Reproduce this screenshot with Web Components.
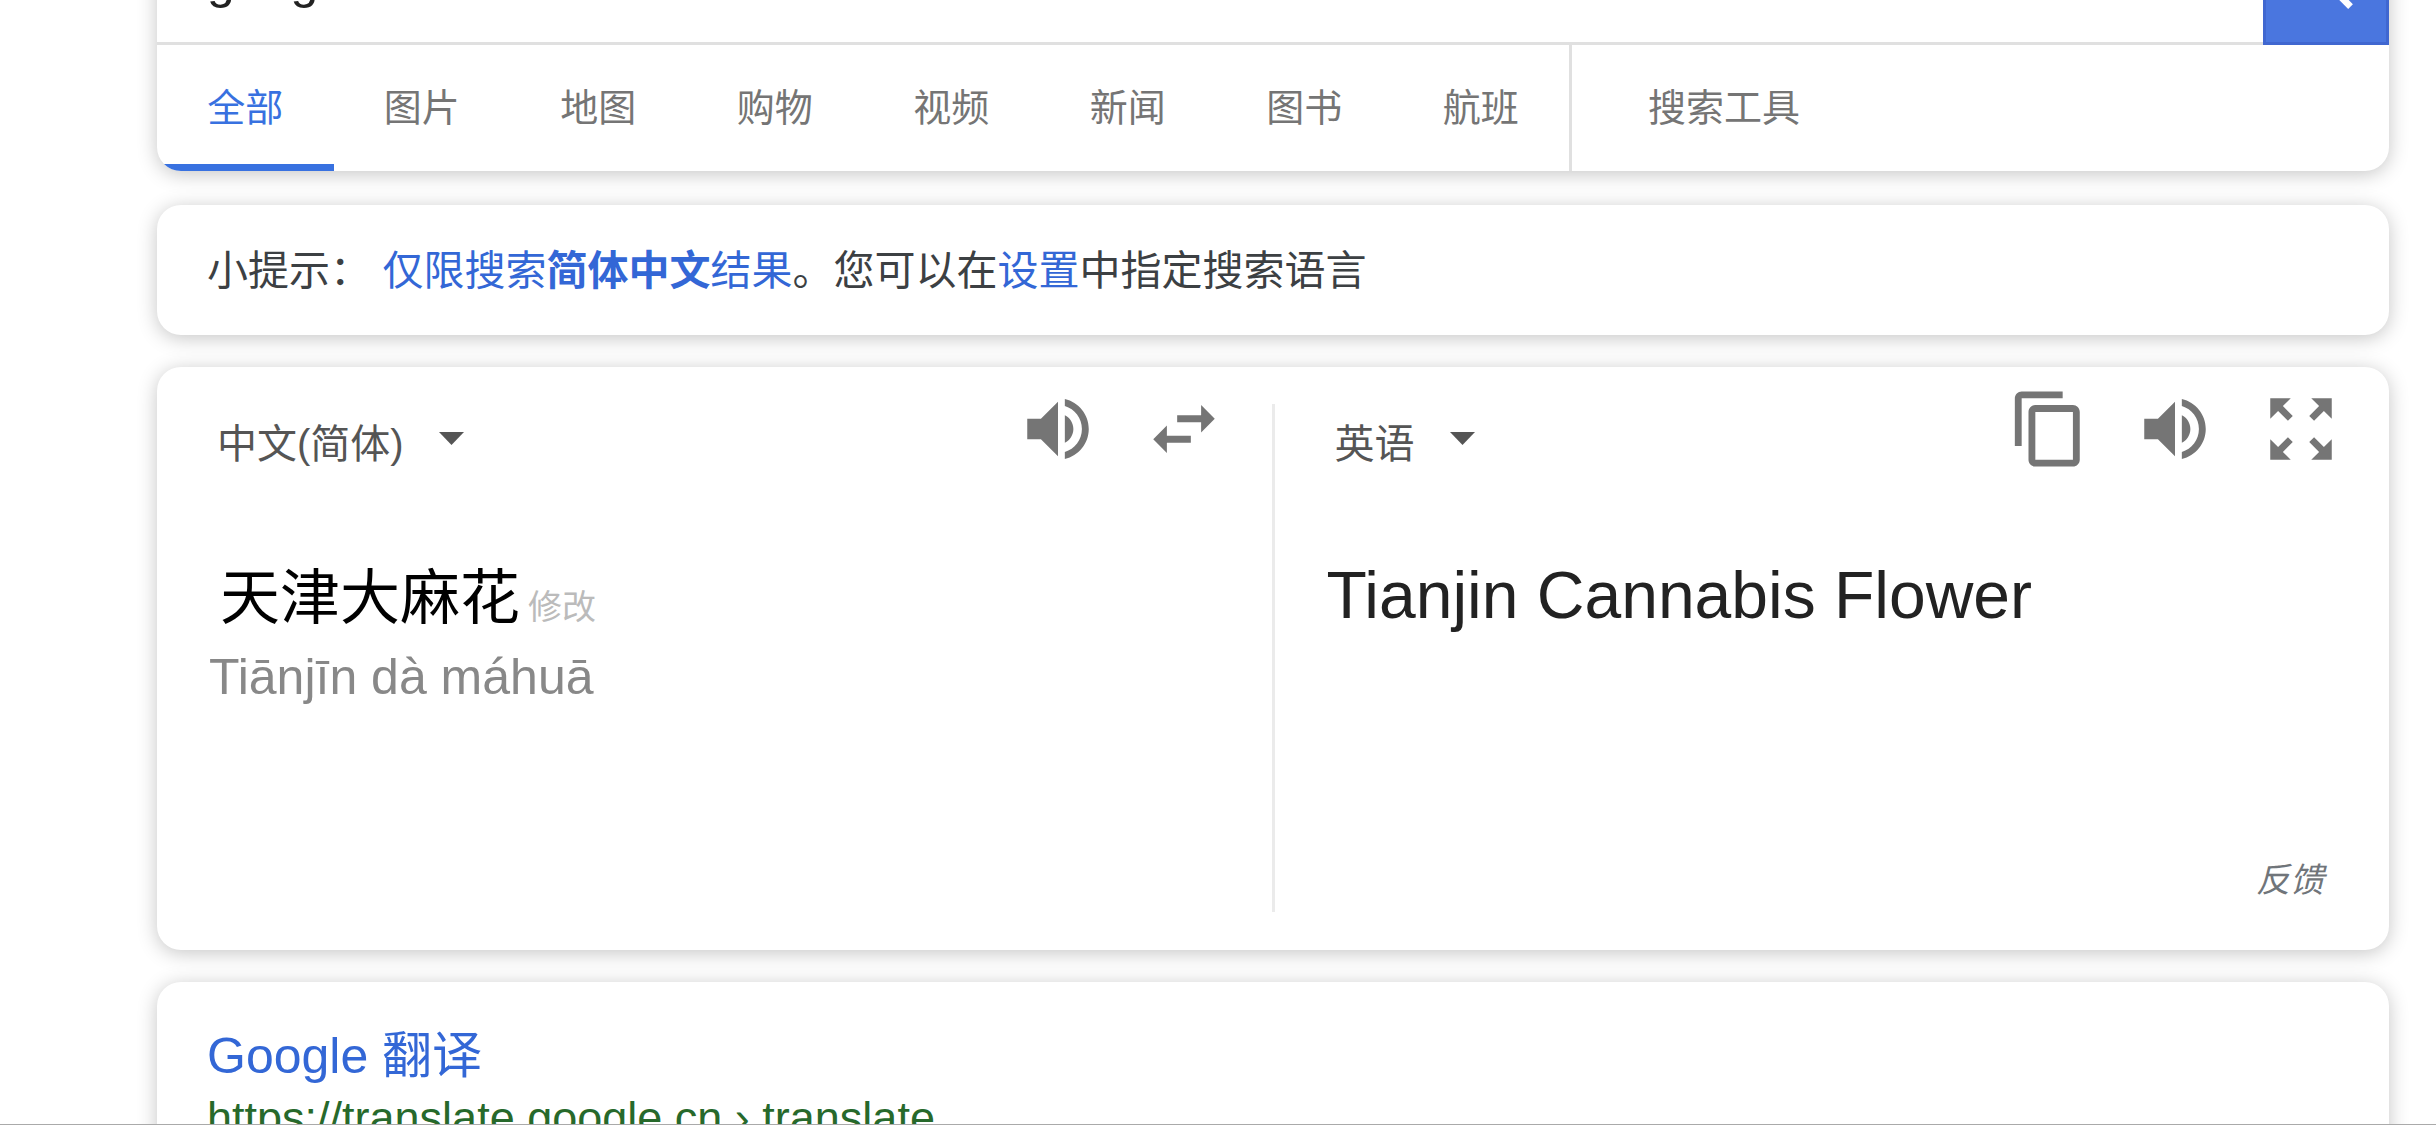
<!DOCTYPE html>
<html lang="zh-CN">
<head>
<meta charset="utf-8">
<meta name="viewport" content="width=device-width, initial-scale=1">
<title>google</title>
<style>
  html, body { margin: 0; height: 100%; }
  body {
    background: #fff;
    color: #3c4043;
    font-family: "Liberation Sans", "Noto Sans CJK SC", sans-serif;
    overflow: hidden;
  }
</style>
</head>
<body>
<search-page></search-page>

<script>
const RESET = `
  *, *::before, *::after { box-sizing: border-box; }
  a { color: inherit; text-decoration: none; }
  button, input, select {
    font: inherit; color: inherit; margin: 0; padding: 0;
    border: 0; border-radius: 0; background: none; outline: 0;
  }
`;

function define(name, html, setup) {
  const template = document.createElement('template');
  template.innerHTML = html;
  customElements.define(name, class extends HTMLElement {
    constructor() {
      super();
      this.attachShadow({ mode: 'open' }).append(template.content.cloneNode(true));
    }
    connectedCallback() {
      if (setup) setup(this, this.shadowRoot);
    }
  });
}

const ICONS = {
  search: 'M15.5 14h-.79l-.28-.27A6.47 6.47 0 0 0 16 9.5 6.5 6.5 0 1 0 9.5 16c1.61 0 3.09-.59 4.23-1.57l.27.28v.79l5 4.99L20.49 19l-4.99-5zm-6 0C7.01 14 5 11.99 5 9.5S7.01 5 9.5 5 14 7.01 14 9.5 11.99 14 9.5 14z',
  volume: 'M3 9v6h4l5 5V4L7 9H3zm13.5 3c0-1.77-1.02-3.29-2.5-4.03v8.05c1.48-.73 2.5-2.25 2.5-4.02zM14 3.23v2.06c2.89.86 5 3.54 5 6.71s-2.11 5.85-5 6.71v2.06c4.01-.91 7-4.49 7-8.77s-2.99-7.86-7-8.77z',
  swap: 'M6.99 11L3 15l3.99 4v-3H14v-2H6.99v-3zM21 9l-3.99-4v3H10v2h7.01v3L21 9z',
  copy: 'M16 1H4c-1.1 0-2 .9-2 2v14h2V3h12V1zm3 4H8c-1.1 0-2 .9-2 2v14c0 1.1.9 2 2 2h11c1.1 0 2-.9 2-2V7c0-1.1-.9-2-2-2zm0 16H8V7h11v14z',
  expand: 'M15 3l2.3 2.3-2.89 2.87 1.42 1.42L18.7 6.7 21 9V3zM3 9l2.3-2.3 2.87 2.89 1.42-1.42L6.7 5.3 9 3H3zm6 12l-2.3-2.3 2.89-2.87-1.42-1.42L5.3 17.3 3 15v6zm12-6l-2.3 2.3-2.87-2.89-1.42 1.42 2.89 2.87L15 21h6z'
};

define('icon-button', `
  <style>${RESET}
    :host { display: block; flex: none; color: #757575; }
    button { display: flex; cursor: pointer; }
    svg { width: var(--icon-size, 82px); height: var(--icon-size, 82px); fill: currentColor; }
  </style>
  <button type="button"><svg viewBox="0 0 24 24" aria-hidden="true"><path/></svg></button>
`, (host, root) => {
  root.querySelector('path').setAttribute('d', ICONS[host.getAttribute('icon')]);
  root.querySelector('button').setAttribute('aria-label', host.getAttribute('label'));
});

define('surface-card', `
  <style>
    :host {
      display: block;
      background: #fff;
      border-radius: 24px;
      box-shadow: 0 3px 20px rgba(0, 0, 0, .23);
    }
  </style>
  <slot></slot>
`);

define('search-box', `
  <style>${RESET}
    :host { display: block; }
    form { display: flex; height: 126px; }
    input {
      flex: 1; min-width: 0;
      padding: 0 50px;
      border-bottom: 3px solid #e0e0e0;
      font-size: 50px;
      color: #222;
    }
    button {
      display: flex; align-items: center; justify-content: center;
      width: 126px;
      background: #4a76df;
      border: 3px solid #4067d0;
      color: #fff;
    }
    svg { width: 76px; height: 76px; fill: currentColor; }
  </style>
  <form role="search">
    <input type="text" name="q" value="google" aria-label="搜索">
    <button type="button" aria-label="Google 搜索">
      <svg viewBox="0 0 24 24" aria-hidden="true"><path d="${ICONS.search}"/></svg>
    </button>
  </form>
`);

define('search-tabs', `
  <style>${RESET}
    :host { display: block; font-size: 38px; line-height: 48px; color: #757575; }
    nav {
      display: flex; height: 126px; overflow: hidden;
      border-radius: 0 0 24px 24px;
    }
    .tabs {
      display: grid; grid-template-columns: repeat(8, 1fr);
      width: 1415px;
      border-right: 3px solid #e0e0e0;
    }
    a { display: flex; align-items: center; justify-content: center; }
    .active { color: #3871e0; box-shadow: inset 0 -7px #3871e0; }
    .tools { padding: 0 76px; }
  </style>
  <nav>
    <div class="tabs">
      <a class="active" href="#all">全部</a>
      <a href="#images">图片</a>
      <a href="#maps">地图</a>
      <a href="#shopping">购物</a>
      <a href="#videos">视频</a>
      <a href="#news">新闻</a>
      <a href="#books">图书</a>
      <a href="#flights">航班</a>
    </div>
    <a class="tools" href="#tools">搜索工具</a>
  </nav>
`);

define('search-tip', `
  <style>${RESET}
    :host { display: block; padding: 36px 50px 34px; font-size: 41px; line-height: 60px; }
    p { margin: 0; }
    a { color: #3367d6; }
  </style>
  <p>小提示： <a href="#lang">仅限搜索<b>简体中文</b>结果</a>。您可以在<a href="#settings">设置</a>中指定搜索语言</p>
`);

define('language-select', `
  <style>${RESET}
    :host { display: block; position: relative; color: #555; }
    select {
      display: block; appearance: none;
      height: 52px; padding-right: 60px;
      font-size: 40px; line-height: 52px;
    }
    svg {
      position: absolute; right: 0; top: 14px;
      width: 25px; height: 13px; fill: currentColor; pointer-events: none;
    }
  </style>
  <select><option></option></select>
  <svg viewBox="0 0 25 13" aria-hidden="true"><path d="M0 0h25L12.500 13z"/></svg>
`, (host, root) => {
  root.querySelector('select').setAttribute('aria-label', host.getAttribute('label'));
  root.querySelector('option').textContent = host.getAttribute('value');
});

define('translate-pane', `
  <style>
    :host { display: flex; flex-direction: column; padding: 21px 47px 50px 52px; }
    .bar { display: flex; align-items: flex-end; gap: 44px; padding-left: 8px; }
    .fill { flex: 1; }
    .text { margin-top: 85px; flex: 1; }
  </style>
  <div class="bar">
    <slot name="language"></slot>
    <span class="fill"></span>
    <slot name="action"></slot>
  </div>
  <div class="text"><slot></slot></div>
  <slot name="footer"></slot>
`);

define('translate-widget', `
  <style>${RESET}
    :host { display: grid; grid-template-columns: 1fr 3px 1fr; min-height: 583px; }
    .divider { background: #ebebeb; margin: 37px 0 38px; }
    p { margin: 0; }
    .source { padding: 4px 0 0 11px; font-size: 60px; line-height: 80px; color: #000; }
    .source a { font-size: 34px; line-height: 40px; margin-left: 8px; color: #bbb; }
    .pinyin { margin-top: 8px; font-size: 50px; line-height: 60px; color: #888; }
    .target { font-size: 66px; line-height: 80px; color: #222; }
    .feedback {
      align-self: flex-end; margin-right: 18px;
      font-size: 34px; line-height: 40px; font-style: italic; color: #70757a;
    }
  </style>
  <translate-pane>
    <language-select slot="language" label="源语言" value="中文(简体)"></language-select>
    <icon-button slot="action" icon="volume" label="朗读原文"></icon-button>
    <icon-button slot="action" icon="swap" label="交换语言"></icon-button>
    <p class="source">天津大麻花<a href="#edit">修改</a></p>
    <p class="pinyin">Tiānjīn dà máhuā</p>
  </translate-pane>
  <div class="divider"></div>
  <translate-pane>
    <language-select slot="language" label="目标语言" value="英语"></language-select>
    <icon-button slot="action" icon="copy" label="复制"></icon-button>
    <icon-button slot="action" icon="volume" label="朗读译文"></icon-button>
    <icon-button slot="action" icon="expand" label="全屏"></icon-button>
    <p class="target">Tianjin Cannabis Flower</p>
    <button class="feedback" slot="footer" type="button">反馈</button>
  </translate-pane>
`);

define('search-result', `
  <style>${RESET}
    :host { display: block; padding: 44px 50px; }
    a { display: flex; flex-direction: column; gap: 4px; }
    .title { font-size: 50px; line-height: 60px; color: #3367d6; }
    .url { font-size: 45px; line-height: 56px; color: #27692b; }
  </style>
  <a href="#translate">
    <span class="title"><slot name="title"></slot></span>
    <span class="url"><slot name="url"></slot></span>
  </a>
`);

define('search-page', `
  <style>
    :host {
      display: block; box-sizing: border-box; height: 100vh; overflow: hidden;
      padding: 0 47px 0 157px;
      border-bottom: 1px solid #aaa;
    }
    /* The page stands scrolled down past the top of the search box. */
    main { display: flex; flex-direction: column; gap: 32px; margin-top: -81px; }
    header { padding-bottom: 2px; }
  </style>
  <main>
    <header>
      <surface-card>
        <search-box></search-box>
        <search-tabs></search-tabs>
      </surface-card>
    </header>
    <surface-card><search-tip></search-tip></surface-card>
    <surface-card><translate-widget></translate-widget></surface-card>
    <surface-card>
      <search-result>
        <span slot="title">Google 翻译</span>
        <span slot="url">https://translate.google.cn › translate</span>
      </search-result>
    </surface-card>
  </main>
`);
</script>
</body>
</html>
